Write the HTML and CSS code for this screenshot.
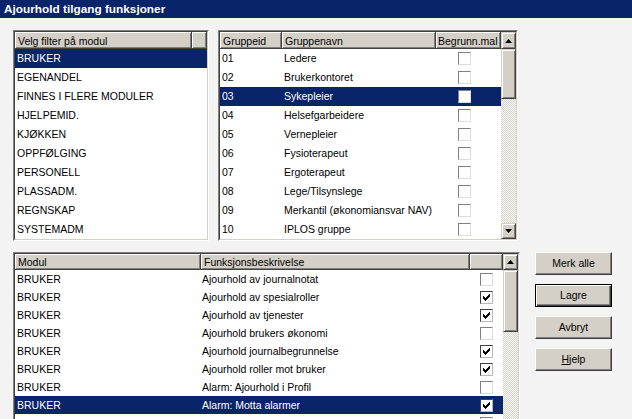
FILE: index.html
```html
<!DOCTYPE html>
<html>
<head>
<meta charset="utf-8">
<link rel="stylesheet" href="styles.css">
</head>
<body>
<div class="window">
  <div class="titlebar">Ajourhold tilgang funksjoner</div>
  <div class="client">
    <div class="top">
      <div class="well modlist">
        <div class="well-in">
          <div class="hdr">
            <div class="hc hc-mod">Velg filter på modul</div>
            <div class="hc hc-fill"></div>
          </div>
          <div class="lrow sel">BRUKER</div>
          <div class="lrow">EGENANDEL</div>
          <div class="lrow">FINNES I FLERE MODULER</div>
          <div class="lrow">HJELPEMID.</div>
          <div class="lrow">KJØKKEN</div>
          <div class="lrow">OPPFØLGING</div>
          <div class="lrow">PERSONELL</div>
          <div class="lrow">PLASSADM.</div>
          <div class="lrow">REGNSKAP</div>
          <div class="lrow">SYSTEMADM</div>
        </div>
      </div>
      <div class="well grpgrid">
        <div class="well-in split">
          <div class="tbl">
            <div class="hdr">
              <div class="hc g1">Gruppeid</div>
              <div class="hc g2">Gruppenavn</div>
              <div class="hc g3">Begrunn.mal</div>
            </div>
            <div class="grow"><div class="c g1">01</div><div class="c g2">Ledere</div><div class="c g3"><span class="cb"></span></div></div>
            <div class="grow"><div class="c g1">02</div><div class="c g2">Brukerkontoret</div><div class="c g3"><span class="cb"></span></div></div>
            <div class="grow sel"><div class="c g1">03</div><div class="c g2">Sykepleier</div><div class="c g3"><span class="cb"></span></div></div>
            <div class="grow"><div class="c g1">04</div><div class="c g2">Helsefgarbeidere</div><div class="c g3"><span class="cb"></span></div></div>
            <div class="grow"><div class="c g1">05</div><div class="c g2">Vernepleier</div><div class="c g3"><span class="cb"></span></div></div>
            <div class="grow"><div class="c g1">06</div><div class="c g2">Fysioterapeut</div><div class="c g3"><span class="cb"></span></div></div>
            <div class="grow"><div class="c g1">07</div><div class="c g2">Ergoterapeut</div><div class="c g3"><span class="cb"></span></div></div>
            <div class="grow"><div class="c g1">08</div><div class="c g2">Lege/Tilsynslege</div><div class="c g3"><span class="cb"></span></div></div>
            <div class="grow"><div class="c g1">09</div><div class="c g2">Merkantil (økonomiansvar NAV)</div><div class="c g3"><span class="cb"></span></div></div>
            <div class="grow"><div class="c g1">10</div><div class="c g2">IPLOS gruppe</div><div class="c g3"><span class="cb"></span></div></div>
          </div>
          <div class="vscroll vs-top">
            <div class="sbtn up-top"><svg width="7" height="4" viewBox="0 0 7 4"><polygon points="3.5,0 7,4 0,4" fill="#000"/></svg></div>
            <div class="thumb thumb-top"></div>
            <div class="track"></div>
            <div class="sbtn down-top"><svg width="7" height="4" viewBox="0 0 7 4"><polygon points="0,0 7,0 3.5,4" fill="#000"/></svg></div>
          </div>
        </div>
      </div>
    </div>
    <div class="bottom">
      <div class="well fungrid">
        <div class="well-in split">
          <div class="tbl">
            <div class="hdr hdr-b">
              <div class="hc b1">Modul</div>
              <div class="hc b2">Funksjonsbeskrivelse</div>
              <div class="hc b3"></div>
            </div>
            <div class="brow"><div class="c b1">BRUKER</div><div class="c b2">Ajourhold av journalnotat</div><div class="c b3"><span class="cb"></span></div></div>
            <div class="brow"><div class="c b1">BRUKER</div><div class="c b2">Ajourhold av spesialroller</div><div class="c b3"><span class="cb on"><svg width="7" height="7" viewBox="0 0 7 7" shape-rendering="crispEdges"><path d="M6 0h1v1h-1zM5 1h2v1h-2zM0 2h1v1h-1zM4 2h3v1h-3zM0 3h2v1h-2zM3 3h3v1h-3zM0 4h5v1h-5zM1 5h3v1h-3zM2 6h1v1h-1z" fill="#000"/></svg></span></div></div>
            <div class="brow"><div class="c b1">BRUKER</div><div class="c b2">Ajourhold av tjenester</div><div class="c b3"><span class="cb on"><svg width="7" height="7" viewBox="0 0 7 7" shape-rendering="crispEdges"><path d="M6 0h1v1h-1zM5 1h2v1h-2zM0 2h1v1h-1zM4 2h3v1h-3zM0 3h2v1h-2zM3 3h3v1h-3zM0 4h5v1h-5zM1 5h3v1h-3zM2 6h1v1h-1z" fill="#000"/></svg></span></div></div>
            <div class="brow"><div class="c b1">BRUKER</div><div class="c b2">Ajourhold brukers økonomi</div><div class="c b3"><span class="cb"></span></div></div>
            <div class="brow"><div class="c b1">BRUKER</div><div class="c b2">Ajourhold journalbegrunnelse</div><div class="c b3"><span class="cb on"><svg width="7" height="7" viewBox="0 0 7 7" shape-rendering="crispEdges"><path d="M6 0h1v1h-1zM5 1h2v1h-2zM0 2h1v1h-1zM4 2h3v1h-3zM0 3h2v1h-2zM3 3h3v1h-3zM0 4h5v1h-5zM1 5h3v1h-3zM2 6h1v1h-1z" fill="#000"/></svg></span></div></div>
            <div class="brow"><div class="c b1">BRUKER</div><div class="c b2">Ajourhold roller mot bruker</div><div class="c b3"><span class="cb on"><svg width="7" height="7" viewBox="0 0 7 7" shape-rendering="crispEdges"><path d="M6 0h1v1h-1zM5 1h2v1h-2zM0 2h1v1h-1zM4 2h3v1h-3zM0 3h2v1h-2zM3 3h3v1h-3zM0 4h5v1h-5zM1 5h3v1h-3zM2 6h1v1h-1z" fill="#000"/></svg></span></div></div>
            <div class="brow"><div class="c b1">BRUKER</div><div class="c b2">Alarm: Ajourhold i Profil</div><div class="c b3"><span class="cb"></span></div></div>
            <div class="brow sel"><div class="c b1">BRUKER</div><div class="c b2">Alarm: Motta alarmer</div><div class="c b3"><span class="cb on"><svg width="7" height="7" viewBox="0 0 7 7" shape-rendering="crispEdges"><path d="M6 0h1v1h-1zM5 1h2v1h-2zM0 2h1v1h-1zM4 2h3v1h-3zM0 3h2v1h-2zM3 3h3v1h-3zM0 4h5v1h-5zM1 5h3v1h-3zM2 6h1v1h-1z" fill="#000"/></svg></span></div></div>
            <div class="brow"><div class="c b1"></div><div class="c b2"></div><div class="c b3"><span class="cb"></span></div></div>
          </div>
          <div class="vscroll vs-bot">
            <div class="sbtn up-bot"><svg width="7" height="4" viewBox="0 0 7 4"><polygon points="3.5,0 7,4 0,4" fill="#000"/></svg></div>
            <div class="thumb thumb-bot"></div>
            <div class="track"></div>
          </div>
        </div>
      </div>
      <div class="btns">
        <div class="btn">Merk alle</div>
        <div class="btn default">Lagre</div>
        <div class="btn">Avbryt</div>
        <div class="btn"><span class="ul">H</span>jelp</div>
      </div>
    </div>
  </div>
</div>
</body>
</html>
```
FILE: styles.css
```css
* { box-sizing: border-box; }
html, body { margin: 0; padding: 0; }
body {
  width: 632px;
  height: 419px;
  overflow: hidden;
  background: #f3f3f3;
  font-family: "Liberation Sans", Arial, sans-serif;
  font-size: 10.5px;
  color: #000;
}
.window { width: 632px; height: 419px; overflow: hidden; }
.titlebar {
  height: 18px;
  line-height: 18px;
  background: #0a246a;
  color: #fff;
  font-weight: bold;
  font-size: 11.8px;
  padding-left: 4px;
  white-space: nowrap;
}
.client { padding: 12px 0 0 13px; }
.top { display: flex; gap: 9px; }
.bottom { display: flex; margin-top: 11px; }

.well {
  border: 1px solid;
  border-color: #808080 #ffffff #ffffff #808080;
  background: #fff;
}
.well-in {
  border: 1px solid;
  border-color: #404040 #d4d0c8 #d4d0c8 #404040;
  height: 100%;
  background: #fff;
  overflow: hidden;
}
.split { display: flex; }
.modlist { width: 196px; height: 211px; }
.grpgrid { width: 300px; height: 211px; }
.fungrid { width: 507px; height: 230px; }

.hdr { display: flex; height: 17px; }
.hdr-b { height: 16px; }
.hc {
  background: #d4d0c8;
  border-right: 1px solid #404040;
  border-bottom: 1px solid #404040;
  box-shadow: inset 1px 1px #fff, inset -1px -1px #808080;
  padding: 1px 0 0 3px;
  line-height: 16px;
  white-space: nowrap;
  overflow: hidden;
}
.hdr-b .hc { line-height: 15px; }
.hc-mod { width: 177px; }
.hc-fill { flex: 1; }

.lrow {
  height: 19px;
  line-height: 19px;
  padding-left: 2px;
  white-space: nowrap;
}
.sel { background: #0a246a; color: #fff; }

.tbl { display: flex; flex-direction: column; }
.grow, .brow { display: flex; white-space: nowrap; }
.grow { height: 19px; line-height: 19px; }
.brow { height: 18px; line-height: 17px; padding-top: 1px; }
.c { overflow: hidden; padding-left: 2px; }
.g1 { width: 62px; }
.g2 { width: 154px; }
.g3 { width: 65px; }
.b1 { width: 186px; }
.b2 { width: 269px; }
.b3 { width: 33px; }
.hc.g3 { padding-left: 2px; }
.c.g3 { display: flex; align-items: center; padding-left: 22px; }
.c.b3 { display: flex; align-items: center; padding-left: 10px; margin-top: -1px; }
.c.b2 { padding-left: 1px; }

.cb {
  width: 13px;
  height: 13px;
  background: #fff;
  border: 1px solid;
  border-color: #808080 #dcdcdc #dcdcdc #808080;
  display: flex;
  align-items: center;
  justify-content: center;
}
.cb.on { border-color: #404040 #b8b8b8 #b8b8b8 #404040; }

.vscroll { display: flex; flex-direction: column; width: 15px; }
.vs-top { height: 207px; }
.vs-bot { height: 100%; }
.sbtn, .thumb {
  background: #d4d0c8;
  border: 1px solid;
  border-color: #d4d0c8 #404040 #404040 #d4d0c8;
  box-shadow: inset 1px 1px #fff, inset -1px -1px #808080;
}
.sbtn { display: flex; align-items: center; justify-content: center; }
.sbtn svg { display: block; }
.up-top { height: 17px; }
.thumb-top { height: 50px; }
.down-top { height: 16px; }
.up-bot { height: 16px; }
.thumb-bot { height: 62px; }
.track {
  flex: 1;
  background-image: conic-gradient(#fff 25%, #d4d0c8 0 50%, #fff 0 75%, #d4d0c8 0);
  background-size: 2px 2px;
}

.btns { display: flex; flex-direction: column; gap: 9px; margin-left: 15px; }
.btn {
  width: 77px;
  height: 23px;
  line-height: 21px;
  text-align: center;
  background: #d4d0c8;
  border: 1px solid;
  border-color: #fff #404040 #404040 #fff;
  box-shadow: inset -1px -1px #808080;
}
.btn.default {
  border-color: #000;
  box-shadow: inset 1px 1px #fff, inset -1px -1px #404040, inset -2px -2px #808080;
}
.ul { text-decoration: underline; }
```
